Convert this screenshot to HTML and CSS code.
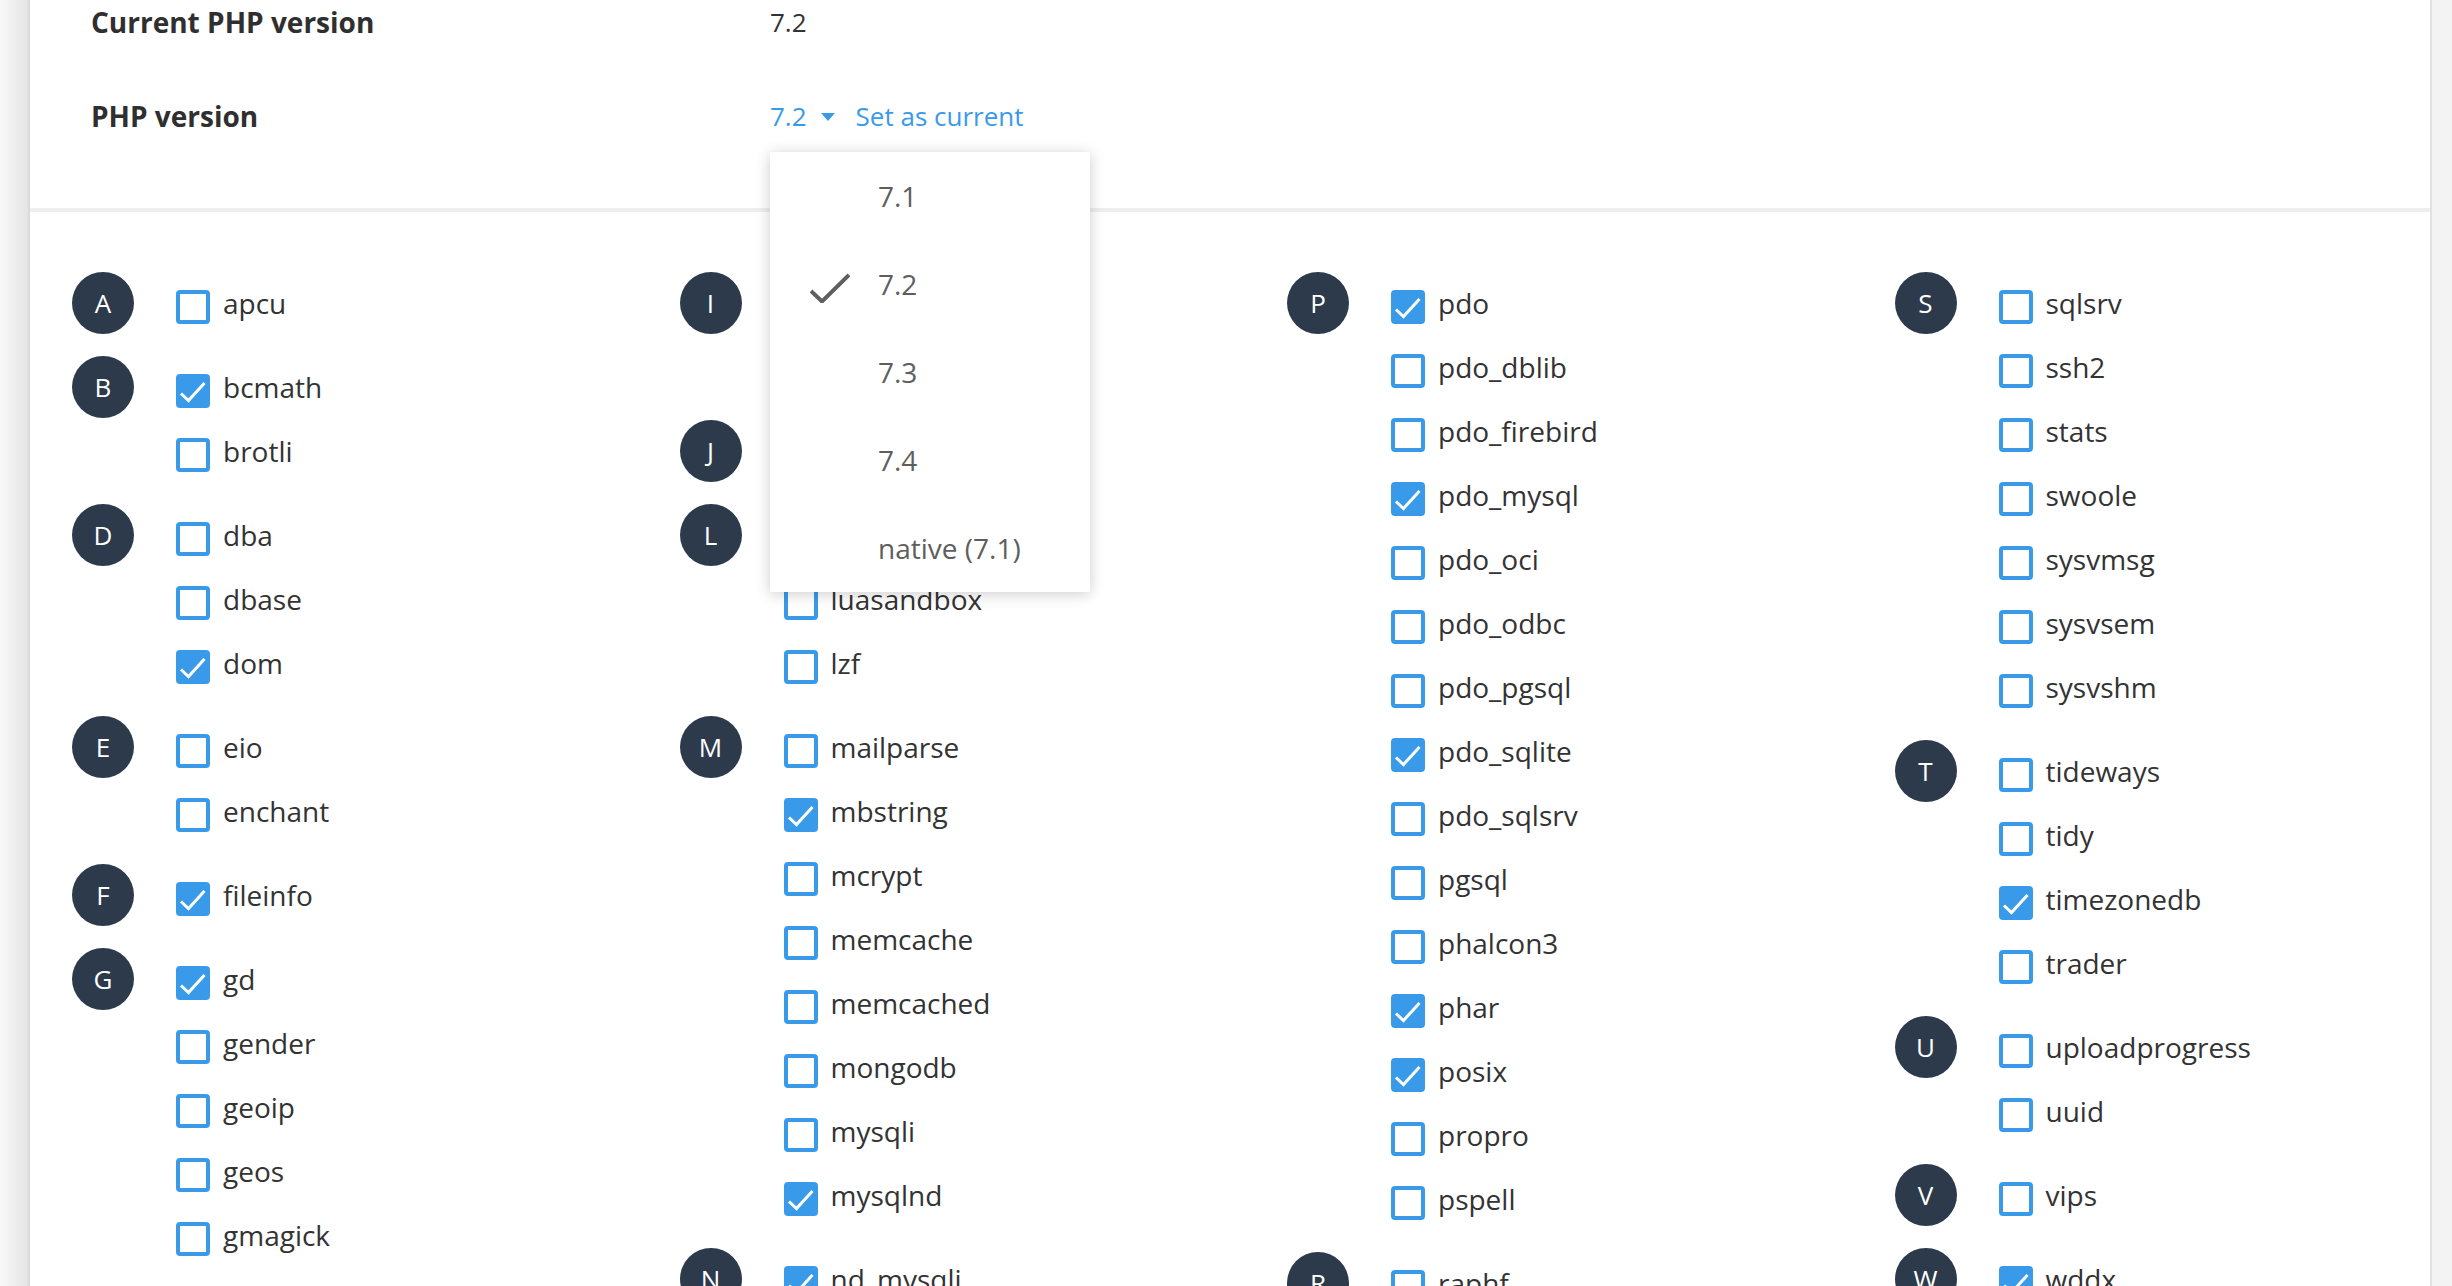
FILE: index.html
```html
<!DOCTYPE html>
<html lang="en">
<head>
<meta charset="utf-8">
<title>PHP Selector</title>
<link rel="stylesheet" href="styles.css">
</head>
<body>
<div class="side-shadow"></div>
<main class="panel">
  <section class="info">
    <div class="info-label">Current PHP version</div>
    <div class="info-value">7.2</div>
    <div class="info-label">PHP version</div>
    <div class="info-value ver-cell">
      <span class="ver-toggle">7.2<span class="caret"></span></span>
      <a class="set-link">Set as current</a>
      <ul class="menu">
        <li class="menu-item"><span class="menu-check"></span><span>7.1</span></li>
        <li class="menu-item"><span class="menu-check"><svg width="40" height="30" viewBox="0 0 40 30"><polyline points="1,18 12,28.5 39,2" fill="none" stroke="#5f5f5f" stroke-width="4"/></svg></span><span>7.2</span></li>
        <li class="menu-item"><span class="menu-check"></span><span>7.3</span></li>
        <li class="menu-item"><span class="menu-check"></span><span>7.4</span></li>
        <li class="menu-item"><span class="menu-check"></span><span>native (7.1)</span></li>
      </ul>
    </div>
  </section>

  <section class="grid">
    <div class="col">
      <div class="group"><span class="letter">A</span><ul class="items">
        <li class="item"><span class="cb"></span><span class="name">apcu</span></li>
      </ul></div>
      <div class="group"><span class="letter">B</span><ul class="items">
        <li class="item"><span class="cb on"><svg viewBox="0 0 34 34"><polyline points="5,19.5 12.5,26.5 28.5,9" /></svg></span><span class="name">bcmath</span></li>
        <li class="item"><span class="cb"></span><span class="name">brotli</span></li>
      </ul></div>
      <div class="group"><span class="letter">D</span><ul class="items">
        <li class="item"><span class="cb"></span><span class="name">dba</span></li>
        <li class="item"><span class="cb"></span><span class="name">dbase</span></li>
        <li class="item"><span class="cb on"><svg viewBox="0 0 34 34"><polyline points="5,19.5 12.5,26.5 28.5,9" /></svg></span><span class="name">dom</span></li>
      </ul></div>
      <div class="group"><span class="letter">E</span><ul class="items">
        <li class="item"><span class="cb"></span><span class="name">eio</span></li>
        <li class="item"><span class="cb"></span><span class="name">enchant</span></li>
      </ul></div>
      <div class="group"><span class="letter">F</span><ul class="items">
        <li class="item"><span class="cb on"><svg viewBox="0 0 34 34"><polyline points="5,19.5 12.5,26.5 28.5,9" /></svg></span><span class="name">fileinfo</span></li>
      </ul></div>
      <div class="group"><span class="letter">G</span><ul class="items">
        <li class="item"><span class="cb on"><svg viewBox="0 0 34 34"><polyline points="5,19.5 12.5,26.5 28.5,9" /></svg></span><span class="name">gd</span></li>
        <li class="item"><span class="cb"></span><span class="name">gender</span></li>
        <li class="item"><span class="cb"></span><span class="name">geoip</span></li>
        <li class="item"><span class="cb"></span><span class="name">geos</span></li>
        <li class="item"><span class="cb"></span><span class="name">gmagick</span></li>
        <li class="item"><span class="cb"></span><span class="name">gmp</span></li>
      </ul></div>
    </div>

    <div class="col">
      <div class="group"><span class="letter">I</span><ul class="items">
        <li class="item"><span class="cb"></span><span class="name">igbinary</span></li>
        <li class="item"><span class="cb"></span><span class="name">imagick</span></li>
      </ul></div>
      <div class="group"><span class="letter">J</span><ul class="items">
        <li class="item"><span class="cb"></span><span class="name">json</span></li>
      </ul></div>
      <div class="group"><span class="letter">L</span><ul class="items">
        <li class="item"><span class="cb"></span><span class="name">ldap</span></li>
        <li class="item"><span class="cb"></span><span class="name">luasandbox</span></li>
        <li class="item"><span class="cb"></span><span class="name">lzf</span></li>
      </ul></div>
      <div class="group"><span class="letter">M</span><ul class="items">
        <li class="item"><span class="cb"></span><span class="name">mailparse</span></li>
        <li class="item"><span class="cb on"><svg viewBox="0 0 34 34"><polyline points="5,19.5 12.5,26.5 28.5,9" /></svg></span><span class="name">mbstring</span></li>
        <li class="item"><span class="cb"></span><span class="name">mcrypt</span></li>
        <li class="item"><span class="cb"></span><span class="name">memcache</span></li>
        <li class="item"><span class="cb"></span><span class="name">memcached</span></li>
        <li class="item"><span class="cb"></span><span class="name">mongodb</span></li>
        <li class="item"><span class="cb"></span><span class="name">mysqli</span></li>
        <li class="item"><span class="cb on"><svg viewBox="0 0 34 34"><polyline points="5,19.5 12.5,26.5 28.5,9" /></svg></span><span class="name">mysqlnd</span></li>
      </ul></div>
      <div class="group"><span class="letter">N</span><ul class="items">
        <li class="item"><span class="cb on"><svg viewBox="0 0 34 34"><polyline points="5,19.5 12.5,26.5 28.5,9" /></svg></span><span class="name">nd_mysqli</span></li>
        <li class="item"><span class="cb"></span><span class="name">nd_pdo_mysql</span></li>
      </ul></div>
    </div>

    <div class="col">
      <div class="group"><span class="letter">P</span><ul class="items">
        <li class="item"><span class="cb on"><svg viewBox="0 0 34 34"><polyline points="5,19.5 12.5,26.5 28.5,9" /></svg></span><span class="name">pdo</span></li>
        <li class="item"><span class="cb"></span><span class="name">pdo_dblib</span></li>
        <li class="item"><span class="cb"></span><span class="name">pdo_firebird</span></li>
        <li class="item"><span class="cb on"><svg viewBox="0 0 34 34"><polyline points="5,19.5 12.5,26.5 28.5,9" /></svg></span><span class="name">pdo_mysql</span></li>
        <li class="item"><span class="cb"></span><span class="name">pdo_oci</span></li>
        <li class="item"><span class="cb"></span><span class="name">pdo_odbc</span></li>
        <li class="item"><span class="cb"></span><span class="name">pdo_pgsql</span></li>
        <li class="item"><span class="cb on"><svg viewBox="0 0 34 34"><polyline points="5,19.5 12.5,26.5 28.5,9" /></svg></span><span class="name">pdo_sqlite</span></li>
        <li class="item"><span class="cb"></span><span class="name">pdo_sqlsrv</span></li>
        <li class="item"><span class="cb"></span><span class="name">pgsql</span></li>
        <li class="item"><span class="cb"></span><span class="name">phalcon3</span></li>
        <li class="item"><span class="cb on"><svg viewBox="0 0 34 34"><polyline points="5,19.5 12.5,26.5 28.5,9" /></svg></span><span class="name">phar</span></li>
        <li class="item"><span class="cb on"><svg viewBox="0 0 34 34"><polyline points="5,19.5 12.5,26.5 28.5,9" /></svg></span><span class="name">posix</span></li>
        <li class="item"><span class="cb"></span><span class="name">propro</span></li>
        <li class="item"><span class="cb"></span><span class="name">pspell</span></li>
      </ul></div>
      <div class="group"><span class="letter">R</span><ul class="items">
        <li class="item"><span class="cb"></span><span class="name">raphf</span></li>
        <li class="item"><span class="cb"></span><span class="name">recode</span></li>
      </ul></div>
    </div>

    <div class="col">
      <div class="group"><span class="letter">S</span><ul class="items">
        <li class="item"><span class="cb"></span><span class="name">sqlsrv</span></li>
        <li class="item"><span class="cb"></span><span class="name">ssh2</span></li>
        <li class="item"><span class="cb"></span><span class="name">stats</span></li>
        <li class="item"><span class="cb"></span><span class="name">swoole</span></li>
        <li class="item"><span class="cb"></span><span class="name">sysvmsg</span></li>
        <li class="item"><span class="cb"></span><span class="name">sysvsem</span></li>
        <li class="item"><span class="cb"></span><span class="name">sysvshm</span></li>
      </ul></div>
      <div class="group"><span class="letter">T</span><ul class="items">
        <li class="item"><span class="cb"></span><span class="name">tideways</span></li>
        <li class="item"><span class="cb"></span><span class="name">tidy</span></li>
        <li class="item"><span class="cb on"><svg viewBox="0 0 34 34"><polyline points="5,19.5 12.5,26.5 28.5,9" /></svg></span><span class="name">timezonedb</span></li>
        <li class="item"><span class="cb"></span><span class="name">trader</span></li>
      </ul></div>
      <div class="group"><span class="letter">U</span><ul class="items">
        <li class="item"><span class="cb"></span><span class="name">uploadprogress</span></li>
        <li class="item"><span class="cb"></span><span class="name">uuid</span></li>
      </ul></div>
      <div class="group"><span class="letter">V</span><ul class="items">
        <li class="item"><span class="cb"></span><span class="name">vips</span></li>
      </ul></div>
      <div class="group"><span class="letter">W</span><ul class="items">
        <li class="item"><span class="cb on"><svg viewBox="0 0 34 34"><polyline points="5,19.5 12.5,26.5 28.5,9" /></svg></span><span class="name">wddx</span></li>
      </ul></div>
    </div>
  </section>
</main>
</body>
</html>
```
FILE: styles.css
```css
html, body {
  margin: 0;
  padding: 0;
  height: 1286px;
  overflow: hidden;
}
body {
  display: flex;
  align-items: stretch;
  background: #f3f3f3;
  font-family: "Open Sans", "Noto Sans", sans-serif;
  color: #333;
}
.side-shadow {
  width: 28px;
  flex: none;
  background: linear-gradient(to right, #f9f9f9, #e4e4e4);
}
.panel {
  width: 2400px;
  flex: none;
  background: #fff;
  border-left: 2px solid #dadada;
  border-right: 2px solid #e2e2e2;
  overflow: hidden;
}

/* header info */
.info {
  display: grid;
  grid-template-columns: 679px auto;
  row-gap: 58px;
  padding: 4px 0 74px 61px;
  border-bottom: 4px solid #eeeeee;
  font-size: 26px;
  line-height: 36px;
}
.info-label {
  font-size: 28px;
  font-weight: 700;
  color: #2f2f2f;
}
.info-value {
  color: #333;
}
.ver-cell {
  position: relative;
  display: flex;
  align-items: center;
}
.ver-toggle {
  display: inline-flex;
  align-items: center;
  color: #3a9aea;
}
.caret {
  width: 0;
  height: 0;
  margin-left: 14px;
  margin-top: 2px;
  border-left: 7px solid transparent;
  border-right: 7px solid transparent;
  border-top: 8px solid #3a9aea;
}
.set-link {
  margin-left: 21px;
  color: #3a9aea;
}
.menu {
  position: absolute;
  top: 54px;
  left: 0;
  z-index: 10;
  width: 320px;
  margin: 0;
  padding: 0;
  list-style: none;
  background: #fff;
  box-shadow: 0 2px 14px rgba(0, 0, 0, 0.2);
}
.menu-item {
  display: flex;
  align-items: center;
  height: 88px;
  padding-left: 40px;
  color: #5e5e5e;
  font-size: 28px;
}
.menu-check {
  width: 68px;
  flex: none;
  display: flex;
  align-items: center;
  margin-top: 8px;
}
.menu-check svg {
  display: block;
}

/* extension grid */
.grid {
  display: grid;
  grid-template-columns: repeat(4, 607.5px);
  padding: 60px 0 0 42px;
}
.col {
  display: flex;
  flex-direction: column;
  gap: 20px;
}
.group {
  display: flex;
  gap: 42px;
}
.letter {
  width: 62px;
  height: 62px;
  flex: none;
  border-radius: 50%;
  background: #2c3a4b;
  color: #fff;
  font-size: 26px;
  display: flex;
  align-items: center;
  justify-content: center;
}
.items {
  margin: 0;
  padding: 0;
  list-style: none;
}
.item {
  height: 64px;
  box-sizing: border-box;
  padding-bottom: 2px;
  display: flex;
  align-items: center;
  gap: 13px;
  font-size: 28px;
  line-height: 38px;
  color: #333;
  white-space: nowrap;
}
.cb {
  width: 34px;
  height: 34px;
  flex: none;
  box-sizing: border-box;
  border: 4px solid #3a9aea;
  border-radius: 4px;
  margin-top: 8px;
  background: #fff;
  position: relative;
}
.cb.on {
  border: none;
  background: #3a9aea;
}
.cb svg {
  display: block;
  width: 34px;
  height: 34px;
}
.cb svg polyline {
  fill: none;
  stroke: #fff;
  stroke-width: 3;
}
```
